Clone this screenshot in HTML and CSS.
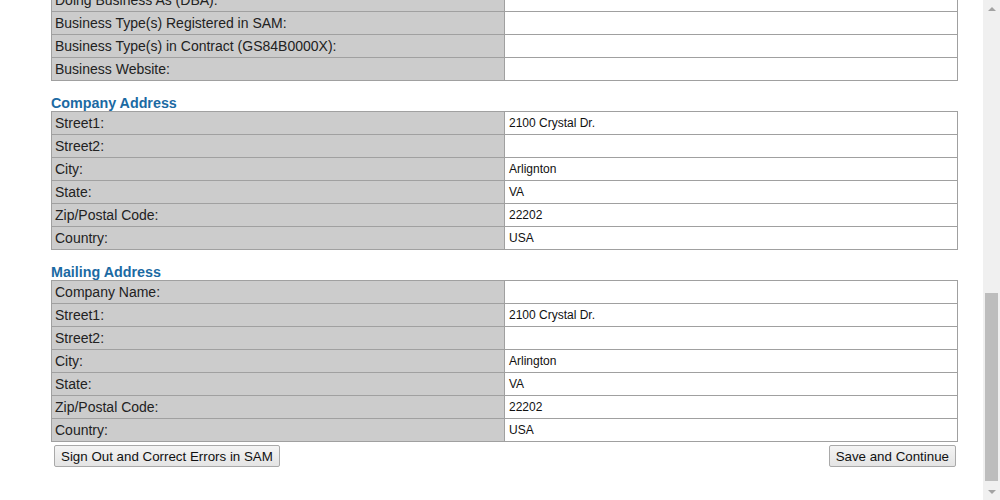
FILE: index.html
```html
<!DOCTYPE html>
<html>
<head>
<meta charset="utf-8">
<link rel="stylesheet" href="styles.css">
</head>
<body>
<div class="window">
  <div class="viewport">
    <div class="page">
      <table class="info">
        <tr><td class="lbl">Business Name:</td><td class="val"></td></tr>
        <tr><td class="lbl">Doing Business As (DBA):</td><td class="val"></td></tr>
        <tr><td class="lbl">Business Type(s) Registered in SAM:</td><td class="val"></td></tr>
        <tr><td class="lbl">Business Type(s) in Contract (GS84B0000X):</td><td class="val"></td></tr>
        <tr><td class="lbl">Business Website:</td><td class="val"></td></tr>
      </table>

      <h2 class="section">Company Address</h2>
      <table class="info">
        <tr><td class="lbl">Street1:</td><td class="val">2100 Crystal Dr.</td></tr>
        <tr><td class="lbl">Street2:</td><td class="val"></td></tr>
        <tr><td class="lbl">City:</td><td class="val">Arlignton</td></tr>
        <tr><td class="lbl">State:</td><td class="val">VA</td></tr>
        <tr><td class="lbl">Zip/Postal Code:</td><td class="val">22202</td></tr>
        <tr><td class="lbl">Country:</td><td class="val">USA</td></tr>
      </table>

      <h2 class="section">Mailing Address</h2>
      <table class="info">
        <tr><td class="lbl">Company Name:</td><td class="val"></td></tr>
        <tr><td class="lbl">Street1:</td><td class="val">2100 Crystal Dr.</td></tr>
        <tr><td class="lbl">Street2:</td><td class="val"></td></tr>
        <tr><td class="lbl">City:</td><td class="val">Arlington</td></tr>
        <tr><td class="lbl">State:</td><td class="val">VA</td></tr>
        <tr><td class="lbl">Zip/Postal Code:</td><td class="val">22202</td></tr>
        <tr><td class="lbl">Country:</td><td class="val">USA</td></tr>
      </table>

      <div class="actions">
        <button class="btn">Sign Out and Correct Errors in SAM</button>
        <button class="btn">Save and Continue</button>
      </div>
    </div>
  </div>
  <div class="scrollbar">
    <div class="arrow up"></div>
    <div class="track-gap"></div>
    <div class="thumb"></div>
    <div class="arrow down"></div>
  </div>
</div>
</body>
</html>
```

FILE: styles.css
```css
* { box-sizing: border-box; }
html, body { margin: 0; padding: 0; background: #fff; }
body { font-family: "Liberation Sans", Arial, sans-serif; }

.window {
  width: 1000px;
  height: 500px;
  display: flex;
  overflow: hidden;
}

.viewport {
  flex: 1;
  height: 500px;
  overflow: hidden;
  display: flex;
  flex-direction: column;
  justify-content: flex-end;
}

.page {
  padding: 0 25px 33px 51px;
}

.info {
  width: 907px;
  border-collapse: collapse;
  table-layout: fixed;
}

.info td {
  border: 1px solid #a0a0a0;
  height: 23px;
  padding: 0 4px;
  vertical-align: middle;
  width: 50%;
}

.lbl {
  background: #cccccc;
  color: #222;
  font-size: 14px;
  padding-left: 3px !important;
}

.val {
  background: #fff;
  color: #111;
  font-size: 12px;
}

.section {
  margin: 14px 0 0 0;
  font-size: 14.3px;
  line-height: 16px;
  font-weight: bold;
  color: #1b6aa3;
}

.actions {
  display: flex;
  justify-content: space-between;
  padding: 3px 2px 0 3px;
}

.btn {
  font-family: "Liberation Sans", Arial, sans-serif;
  font-size: 13.333px;
  color: #111;
  height: 22px;
  padding: 0 6px;
  background: linear-gradient(#f4f4f4, #e4e4e4);
  border: 1px solid #a9a9a9;
  border-radius: 2px;
}

.scrollbar {
  width: 17px;
  height: 500px;
  background: #f0f0f0;
  display: flex;
  flex-direction: column;
  align-items: center;
}

.arrow {
  width: 17px;
  height: 17px;
  display: flex;
  align-items: center;
  justify-content: center;
}

.arrow.up::before {
  content: "";
  border-left: 4px solid transparent;
  border-right: 4px solid transparent;
  border-bottom: 4px solid #a3a3a3;
}

.arrow.down::before {
  content: "";
  border-left: 4px solid transparent;
  border-right: 4px solid transparent;
  border-top: 4px solid #a3a3a3;
}

.track-gap { height: 276px; }

.thumb {
  width: 13px;
  height: 188px;
  background: #bdbdbd;
}
.scrollbar .arrow.down { margin-top: auto; }
```
